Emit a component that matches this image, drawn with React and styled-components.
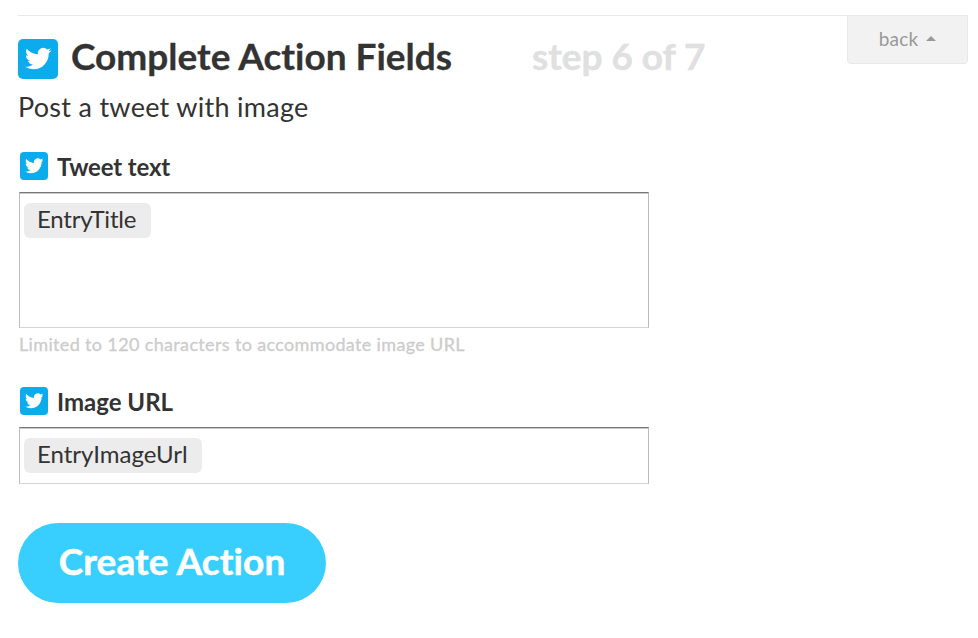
import React from "react";
import styled, { createGlobalStyle } from "styled-components";

const GlobalStyle = createGlobalStyle`
  * {
    box-sizing: border-box;
  }
  body {
    margin: 0;
    background-color: #fff;
    color: #333;
    font-family: Lato, "Open Sans", sans-serif;
    font-variant-ligatures: none;
  }
`;

const Page = styled.div`
  width: 978px;
  height: 638px;
  padding: 15px 10px 0 18px;
`;

const Header = styled.header`
  display: flex;
  align-items: flex-start;
  height: 73px;
  border-top: 1px solid #e8e8e8;
`;

const Heading = styled.div`
  display: flex;
  flex: 1;
  padding-top: 23px;
`;

const Title = styled.h1`
  width: 461px;
  margin: -3px 0 0 13px;
  font-size: 37px;
  line-height: 40px;
  font-weight: 700;
  letter-spacing: 0;
  white-space: nowrap;
  -webkit-text-stroke: 0.3px #333;
`;

const Step = styled.span`
  margin: -3px 0 0;
  color: #e0e0e0;
  font-size: 37px;
  line-height: 40px;
  font-weight: 700;
  letter-spacing: -0.05px;
  white-space: nowrap;
  -webkit-text-stroke: 0.4px #e0e0e0;
`;

const BackButton = styled.button`
  display: flex;
  align-items: center;
  justify-content: center;
  gap: 8px;
  width: 121px;
  height: 49px;
  margin-top: -1px;
  padding: 0 0 3px;
  border: 1px solid #e8e8e8;
  border-radius: 0 0 4px 4px;
  background-color: #f2f2f2;
  color: #999;
  font-family: inherit;
  font-size: 19px;
  letter-spacing: 0.2px;
`;

const Caret = styled.span`
  border: 5px solid transparent;
  border-top: 0;
  border-bottom-color: #999;
`;

const Badge = styled.span`
  display: flex;
  flex: none;
  align-items: center;
  justify-content: center;
  width: ${(props) => props.$size}px;
  height: ${(props) => props.$size}px;
  border-radius: ${(props) => (props.$size > 30 ? 5 : 4)}px;
  background-color: #0bacee;
`;

const Subtitle = styled.p`
  height: 64px;
  margin: 0;
  padding-top: 2px;
  font-size: 27px;
  line-height: 34px;
  letter-spacing: 0.28px;
`;

const Field = styled.div`
  width: 631px;
  height: ${(props) => props.$height}px;
  padding-left: 1px;
`;

const Label = styled.label`
  display: flex;
  align-items: center;
  gap: 9px;
  height: 28px;
  margin: 0 0 12px 1px;
  font-size: 24px;
  font-weight: 700;
  letter-spacing: ${(props) => props.$spacing || 0}px;
`;

const Input = styled.div`
  height: ${(props) => props.$height}px;
  padding: 10px 4px;
  border: 1px solid #bbb;
  border-top-color: #777;
  border-bottom-color: #d5d5d5;
  box-shadow: inset 0 1px #c8c8c8;
`;

const Chip = styled.span`
  display: block;
  width: ${(props) => props.$width}px;
  height: 35px;
  padding-left: 13px;
  border-radius: 6px;
  background-color: #ececec;
  font-size: 24px;
  line-height: 32px;
  letter-spacing: ${(props) => props.$spacing || 0}px;
`;

const Hint = styled.p`
  margin: 4px 0 0;
  color: #ccc;
  font-size: 18px;
  line-height: 24px;
  letter-spacing: 0.35px;
  white-space: nowrap;
  -webkit-text-stroke: 0.3px #ccc;
`;

const SubmitButton = styled.button`
  width: 308px;
  height: 80px;
  padding: 0 0 5px;
  border: 0;
  border-radius: 40px;
  background-color: #38cfff;
  color: #fff;
  font-family: inherit;
  font-size: 37px;
  font-weight: 700;
  font-variant-ligatures: none;
  letter-spacing: 0.1px;
  -webkit-text-stroke: 0.5px #fff;
`;

const TwitterBadge = ({ size }) => (
  <Badge $size={size}>
    <svg
      width={size * 0.66}
      height={size * 0.66}
      viewBox="0 0.6 24 24"
      fill="#fff"
      aria-hidden="true"
    >
      <path d="M23.953 4.57a10 10 0 0 1-2.825.775 4.958 4.958 0 0 0 2.163-2.723c-.951.555-2.005.959-3.127 1.184a4.92 4.92 0 0 0-8.384 4.482C7.69 8.095 4.067 6.13 1.64 3.162a4.822 4.822 0 0 0-.666 2.475c0 1.71.87 3.213 2.188 4.096a4.904 4.904 0 0 1-2.228-.616v.06a4.923 4.923 0 0 0 3.946 4.827 4.996 4.996 0 0 1-2.212.085 4.936 4.936 0 0 0 4.604 3.417 9.867 9.867 0 0 1-6.102 2.105c-.39 0-.779-.023-1.17-.067a13.995 13.995 0 0 0 7.557 2.209c9.053 0 13.998-7.496 13.998-13.985 0-.21 0-.42-.015-.63A9.935 9.935 0 0 0 24 4.59z" />
    </svg>
  </Badge>
);

const App = () => {
  return (
    <Page>
      <GlobalStyle />
      <Header>
        <Heading>
          <TwitterBadge size={40} />
          <Title>Complete Action Fields</Title>
          <Step>step 6 of 7</Step>
        </Heading>
        <BackButton>
          back <Caret />
        </BackButton>
      </Header>
      <Subtitle>Post a tweet with image</Subtitle>
      <Field $height={235}>
        <Label $spacing={-0.15}>
          <TwitterBadge size={28} />
          Tweet text
        </Label>
        <Input $height={136}>
          <Chip $width={127} $spacing={-0.2}>
            EntryTitle
          </Chip>
        </Input>
        <Hint>Limited to 120 characters to accommodate image URL</Hint>
      </Field>
      <Field $height={136}>
        <Label>
          <TwitterBadge size={28} />
          Image URL
        </Label>
        <Input $height={57}>
          <Chip $width={178}>EntryImageUrl</Chip>
        </Input>
      </Field>
      <SubmitButton>Create Action</SubmitButton>
    </Page>
  );
};

export default App;
